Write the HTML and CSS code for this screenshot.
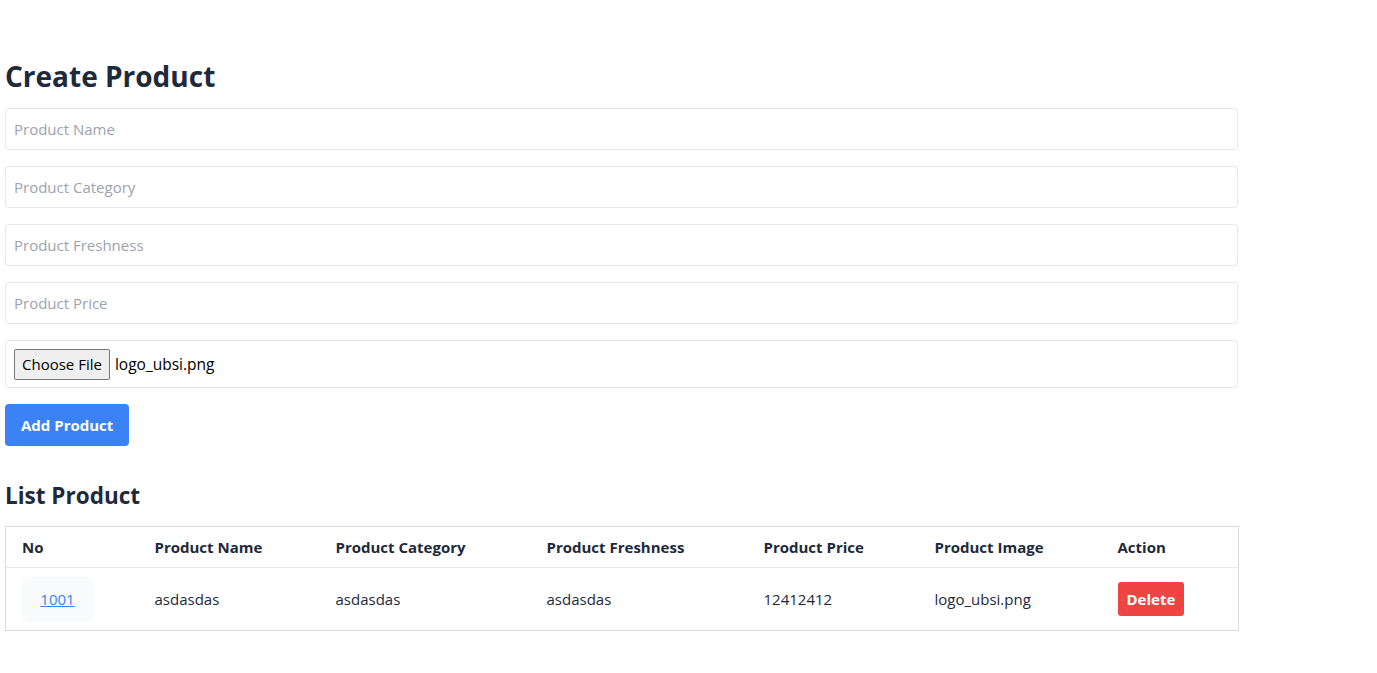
FILE: index.html
```html
<!DOCTYPE html>
<html>
<head>
<meta charset="utf-8">
<link rel="stylesheet" href="styles.css">
</head>
<body>
<div class="page">
  <h1 class="title">Create Product</h1>
  <form class="form">
    <input class="field" type="text" placeholder="Product Name">
    <input class="field" type="text" placeholder="Product Category">
    <input class="field" type="text" placeholder="Product Freshness">
    <input class="field" type="text" placeholder="Product Price">
    <div class="field file-field">
      <span class="file-btn">Choose File</span>
      <span class="file-name">logo_ubsi.png</span>
    </div>
    <div class="actions"><button type="button" class="btn-add">Add Product</button></div>
  </form>
  <h2 class="subtitle">List Product</h2>
  <table class="table">
    <colgroup>
      <col class="c1"><col class="c2"><col class="c3"><col class="c4"><col class="c5"><col class="c6"><col class="c7">
    </colgroup>
    <thead>
      <tr>
        <th>No</th>
        <th>Product Name</th>
        <th>Product Category</th>
        <th>Product Freshness</th>
        <th>Product Price</th>
        <th>Product Image</th>
        <th>Action</th>
      </tr>
    </thead>
    <tbody>
      <tr>
        <td><span class="no-box"><a href="#" class="no-link">1001</a></span></td>
        <td>asdasdas</td>
        <td>asdasdas</td>
        <td>asdasdas</td>
        <td>12412412</td>
        <td>logo_ubsi.png</td>
        <td><button type="button" class="btn-del">Delete</button></td>
      </tr>
    </tbody>
  </table>
</div>
</body>
</html>
```
FILE: styles.css
```css
* { box-sizing: border-box; }
body {
  margin: 0;
  font-family: "Open Sans", "Noto Sans", sans-serif;
  color: #1e293b;
  background: #fff;
}
.page {
  width: 1233px;
  margin-left: 5px;
  padding-top: 56px;
}
.title {
  margin: 0 0 12px;
  font-size: 28px;
  line-height: 40px;
  font-weight: 700;
  color: #1e293b;
}
.form {
  display: flex;
  flex-direction: column;
  gap: 16px;
}
.field {
  height: 42px;
  width: 100%;
  border: 1px solid #e5e7eb;
  border-radius: 4px;
  padding: 0 8px;
  font-family: inherit;
  font-size: 15px;
  color: #1e293b;
  outline: none;
}
.field::placeholder { color: #9ca3af; }
.file-field {
  height: 48px;
  display: flex;
  align-items: center;
  gap: 5px;
}
.file-btn {
  display: inline-flex;
  align-items: center;
  height: 31px;
  padding: 0 7px;
  background: #efefef;
  border: 1px solid #767676;
  border-radius: 2px;
  font-size: 15px;
  color: #000;
}
.file-name { font-size: 15.5px; color: #000; }
.actions { display: flex; }
.btn-add {
  height: 42px;
  padding: 0 16px;
  background: #3b82f6;
  color: #fff;
  border: 0;
  border-radius: 4px;
  font-family: inherit;
  font-size: 15px;
  font-weight: 700;
}
.subtitle {
  margin: 34px 0 14px;
  font-size: 22.5px;
  line-height: 32px;
  font-weight: 700;
}
.table {
  width: 100%;
  border-collapse: collapse;
  border: 1px solid #d9dbe0;
  table-layout: fixed;
  font-size: 15px;
}
.c1 { width: 133px; }
.c2 { width: 181px; }
.c3 { width: 211px; }
.c4 { width: 217px; }
.c5 { width: 171px; }
.c6 { width: 183px; }
.c7 { width: 137px; }
.table th {
  text-align: left;
  font-weight: 700;
  height: 41px;
  padding: 0 16px;
  border-bottom: 1px solid #e5e7eb;
}
.table td {
  height: 63px;
  padding: 0 16px;
}
.no-box {
  display: inline-flex;
  align-items: center;
  justify-content: center;
  width: 71px;
  height: 45px;
  background: #f9fafb;
  border-radius: 8px;
}
.no-link { color: #3b82f6; text-decoration: underline; }
.btn-del {
  height: 34px;
  padding: 0 9px;
  background: #ef4444;
  color: #fff;
  border: 0;
  border-radius: 3px;
  font-family: inherit;
  font-size: 15px;
  font-weight: 700;
}
```
